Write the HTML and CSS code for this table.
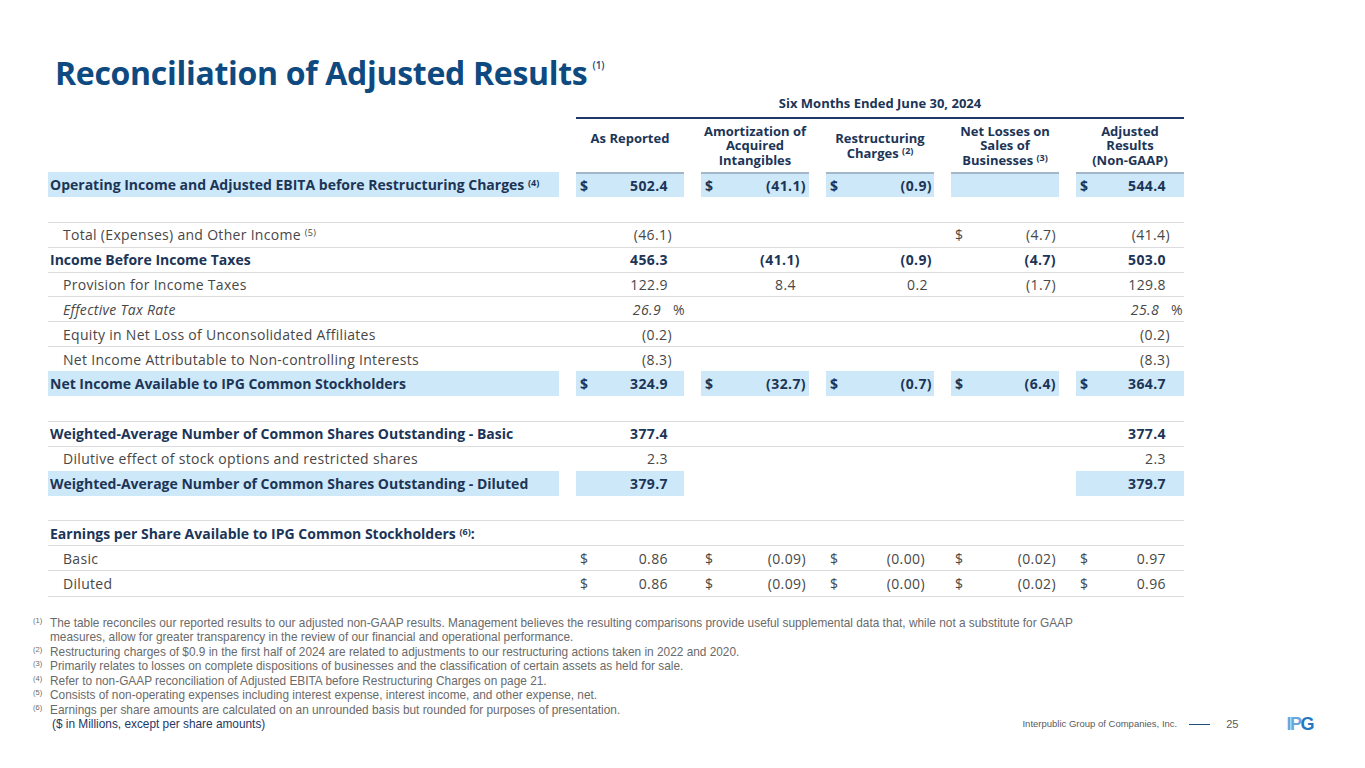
FILE: index.html
```html
<!DOCTYPE html>
<html>
<head>
<meta charset="utf-8">
<title>Reconciliation of Adjusted Results</title>
<link rel="stylesheet" href="styles.css">
</head>
<body>
<div class="slide">
  <h1 class="title">Reconciliation of Adjusted Results<sup>(1)</sup></h1>

  <div class="tbl">
    <div class="grid period-row"><div></div><div class="period">Six Months Ended June 30, 2024</div></div>
    <div class="grid head">
      <div></div>
      <div class="hc up"><span>As Reported</span></div>
      <div class="hc"><span>Amortization of<br>Acquired<br>Intangibles</span></div>
      <div class="hc"><span>Restructuring<br>Charges <sup>(2)</sup></span></div>
      <div class="hc"><span>Net Losses on<br>Sales of<br>Businesses <sup>(3)</sup></span></div>
      <div class="hc"><span>Adjusted<br>Results<br>(Non-GAAP)</span></div>
    </div>

    <div class="grid row bold first">
      <div class="lbl hl"><span>Operating Income and Adjusted EBITA before Restructuring Charges <sup>(4)</sup></span></div>
      <div class="c hl"><span>$</span><span class="p">502.4</span></div>
      <div class="c hl"><span>$</span><span>(41.1)</span></div>
      <div class="c hl"><span>$</span><span>(0.9)</span></div>
      <div class="c hl"></div>
      <div class="c hl"><span>$</span><span class="p">544.4</span></div>
    </div>
    <div class="grid row"></div>

    <div class="grid row sep">
      <div class="lbl ind"><span>Total (Expenses) and Other Income <sup>(5)</sup></span></div>
      <div class="c"><span class="n">(46.1)</span></div>
      <div class="c"></div>
      <div class="c"></div>
      <div class="c"><span>$</span><span>(4.7)</span></div>
      <div class="c"><span class="n">(41.4)</span></div>
    </div>
    <div class="grid row sep bold">
      <div class="lbl"><span>Income Before Income Taxes</span></div>
      <div class="c"><span class="n p">456.3</span></div>
      <div class="c ins"><span class="n">(41.1)</span></div>
      <div class="c"><span class="n">(0.9)</span></div>
      <div class="c"><span class="n">(4.7)</span></div>
      <div class="c"><span class="n p">503.0</span></div>
    </div>
    <div class="grid row sep">
      <div class="lbl ind"><span>Provision for Income Taxes</span></div>
      <div class="c"><span class="n p">122.9</span></div>
      <div class="c ins"><span class="n p">8.4</span></div>
      <div class="c"><span class="n p">0.2</span></div>
      <div class="c"><span class="n">(1.7)</span></div>
      <div class="c"><span class="n p">129.8</span></div>
    </div>
    <div class="grid row sep ital">
      <div class="lbl ind"><span>Effective Tax Rate</span></div>
      <div class="c"><span class="n">26.9</span><span class="pct">%</span></div>
      <div class="c"></div>
      <div class="c"></div>
      <div class="c"></div>
      <div class="c"><span class="n">25.8</span><span class="pct">%</span></div>
    </div>
    <div class="grid row sep">
      <div class="lbl ind"><span>Equity in Net Loss of Unconsolidated Affiliates</span></div>
      <div class="c"><span class="n">(0.2)</span></div>
      <div class="c"></div>
      <div class="c"></div>
      <div class="c"></div>
      <div class="c"><span class="n">(0.2)</span></div>
    </div>
    <div class="grid row sep">
      <div class="lbl ind"><span>Net Income Attributable to Non-controlling Interests</span></div>
      <div class="c"><span class="n">(8.3)</span></div>
      <div class="c"></div>
      <div class="c"></div>
      <div class="c"></div>
      <div class="c"><span class="n">(8.3)</span></div>
    </div>
    <div class="grid row bold">
      <div class="lbl hl"><span>Net Income Available to IPG Common Stockholders</span></div>
      <div class="c hl"><span>$</span><span class="p">324.9</span></div>
      <div class="c hl"><span>$</span><span>(32.7)</span></div>
      <div class="c hl"><span>$</span><span>(0.7)</span></div>
      <div class="c hl"><span>$</span><span>(6.4)</span></div>
      <div class="c hl"><span>$</span><span class="p">364.7</span></div>
    </div>
    <div class="grid row"></div>

    <div class="grid row sep bold">
      <div class="lbl"><span>Weighted-Average Number of Common Shares Outstanding - Basic</span></div>
      <div class="c"><span class="n p">377.4</span></div>
      <div class="c"></div>
      <div class="c"></div>
      <div class="c"></div>
      <div class="c"><span class="n p">377.4</span></div>
    </div>
    <div class="grid row sep">
      <div class="lbl ind"><span>Dilutive effect of stock options and restricted shares</span></div>
      <div class="c"><span class="n p">2.3</span></div>
      <div class="c"></div>
      <div class="c"></div>
      <div class="c"></div>
      <div class="c"><span class="n p">2.3</span></div>
    </div>
    <div class="grid row bold">
      <div class="lbl hl"><span>Weighted-Average Number of Common Shares Outstanding - Diluted</span></div>
      <div class="c hl"><span class="n p">379.7</span></div>
      <div class="c"></div>
      <div class="c"></div>
      <div class="c"></div>
      <div class="c hl"><span class="n p">379.7</span></div>
    </div>
    <div class="grid row"></div>

    <div class="grid row sep bold">
      <div class="lbl"><span>Earnings per Share Available to IPG Common Stockholders <sup>(6)</sup>:</span></div>
      <div class="c"></div>
      <div class="c"></div>
      <div class="c"></div>
      <div class="c"></div>
      <div class="c"></div>
    </div>
    <div class="grid row sep">
      <div class="lbl ind"><span>Basic</span></div>
      <div class="c"><span>$</span><span class="p">0.86</span></div>
      <div class="c"><span>$</span><span>(0.09)</span></div>
      <div class="c ins"><span>$</span><span>(0.00)</span></div>
      <div class="c"><span>$</span><span>(0.02)</span></div>
      <div class="c"><span>$</span><span class="p">0.97</span></div>
    </div>
    <div class="grid row sep last">
      <div class="lbl ind"><span>Diluted</span></div>
      <div class="c"><span>$</span><span class="p">0.86</span></div>
      <div class="c"><span>$</span><span>(0.09)</span></div>
      <div class="c ins"><span>$</span><span>(0.00)</span></div>
      <div class="c"><span>$</span><span>(0.02)</span></div>
      <div class="c"><span>$</span><span class="p">0.96</span></div>
    </div>
  </div>

  <div class="notes">
    <div class="note"><span class="fn">(1)</span><span>The table reconciles our reported results to our adjusted non-GAAP results. Management believes the resulting comparisons provide useful supplemental data that, while not a substitute for GAAP<br>measures, allow for greater transparency in the review of our financial and operational performance.</span></div>
    <div class="note"><span class="fn">(2)</span><span>Restructuring charges of $0.9 in the first half of 2024 are related to adjustments to our restructuring actions taken in 2022 and 2020.</span></div>
    <div class="note"><span class="fn">(3)</span><span>Primarily relates to losses on complete dispositions of businesses and the classification of certain assets as held for sale.</span></div>
    <div class="note"><span class="fn">(4)</span><span>Refer to non-GAAP reconciliation of Adjusted EBITA before Restructuring Charges on page 21.</span></div>
    <div class="note"><span class="fn">(5)</span><span>Consists of non-operating expenses including interest expense, interest income, and other expense, net.</span></div>
    <div class="note"><span class="fn">(6)</span><span>Earnings per share amounts are calculated on an unrounded basis but rounded for purposes of presentation.</span></div>
    <div class="bottom">
      <span class="units">($ in Millions, except per share amounts)</span>
      <div class="foot">
        <span class="company">Interpublic Group of Companies, Inc.</span>
        <span class="rule"></span>
        <span class="page">25</span>
        <span class="logo"><span class="li">I</span><span class="lp">P</span><span class="lg">G</span></span>
      </div>
    </div>
  </div>
</div>
</body>
</html>
```
FILE: styles.css
```css
* { box-sizing: border-box; }
html, body { margin: 0; padding: 0; background: #ffffff; }
body {
  width: 1365px;
  height: 768px;
  overflow: hidden;
  font-family: "Open Sans", "DejaVu Sans", sans-serif;
}
.slide { width: 1365px; height: 768px; }

.title {
  margin: 0;
  padding: 53px 0 0 55px;
  height: 93px;
  font-family: "Open Sans", sans-serif;
  font-weight: 700;
  font-size: 32px;
  line-height: 40px;
  color: #0e4a80;
  letter-spacing: -0.3px;
  white-space: nowrap;
}
.title sup {
  font-size: 10px;
  font-weight: 600;
  letter-spacing: 0;
  vertical-align: 16px;
  line-height: 0;
  margin-left: 5px;
}

.tbl { margin-left: 48px; width: 1136px; }
.grid {
  display: grid;
  grid-template-columns: 511px repeat(5, 108px);
  column-gap: 17px;
}
.period {
  grid-column: 2 / 7;
  text-align: center;
  font-weight: 700;
  font-size: 13px;
  color: #1c3557;
  line-height: 20px;
  padding-bottom: 4px;
  border-bottom: 2px solid #1f3864;
}
.head { height: 53px; }
.hc {
  display: flex;
  align-items: center;
  justify-content: center;
  text-align: center;
  font-weight: 700;
  font-size: 13px;
  line-height: 14.5px;
  color: #1c3557;
}
.hc.up { padding-bottom: 15px; }
.hc sup, .lbl sup {
  font-size: 9px;
  vertical-align: 4px;
  line-height: 0;
}

.row {
  height: 24.9px;
  font-size: 14px;
  color: #474747;
  letter-spacing: 0.3px;
}
.row.sep { border-top: 1.5px solid #dcdcdc; }
.row.last { border-bottom: 1.5px solid #dcdcdc; height: 26.4px; }
.row.bold { font-weight: 700; color: #1c3557; letter-spacing: 0; }
.row.ital { font-style: italic; }

.lbl {
  display: flex;
  align-items: center;
  padding-left: 2px;
  white-space: nowrap;
}
.lbl.ind { padding-left: 15px; }
.hl { background: #cde8f8; }
.first .c { border-top: 2px solid #a3b7c9; }

.c {
  display: flex;
  align-items: center;
  justify-content: space-between;
  padding: 0 12px 0 4px;
  white-space: nowrap;
  letter-spacing: 0.4px;
}
.row .c:nth-child(3) { padding-right: 3px; }
.row .c:nth-child(4) { padding-right: 2px; }
.row .c:nth-child(5) { padding-right: 3px; }
.row .c:nth-child(6) { padding-right: 14px; }
.row .c.ins { padding-right: 9px; }
.c .n { margin-left: auto; }
.c .p { padding-right: 4px; }
.c .pct { margin-left: 12px; margin-right: -13px; font-style: normal; }

.notes {
  margin-top: 19px;
  font-family: "Liberation Sans", Arial, sans-serif;
  font-size: 11.85px;
  line-height: 14.5px;
  color: #6a6a6a;
}
.note {
  display: grid;
  grid-template-columns: 17px 1fr;
  padding-left: 33px;
}
.fn {
  font-size: 7.5px;
  line-height: 10px;
}
.bottom {
  display: flex;
  align-items: center;
  height: 14.5px;
  padding-left: 52px;
  padding-right: 52px;
}
.units { color: #1f3864; font-size: 11.85px; }
.foot {
  margin-left: auto;
  display: flex;
  align-items: center;
  font-size: 9.5px;
  color: #5a5a5a;
}
.rule {
  width: 21px;
  height: 1px;
  background: #1f4e79;
  margin: 0 16px 0 12px;
}
.page { font-size: 11px; color: #5a5a5a; }
.logo {
  margin-left: 48px;
  font-family: "Liberation Sans", Arial, sans-serif;
  font-weight: 700;
  font-size: 18px;
  letter-spacing: -1.5px;
  line-height: 18px;
}
.li { color: #6aa6dc; }
.lp { color: #6aa6dc; }
.lg { color: #1f78c4; }
```
